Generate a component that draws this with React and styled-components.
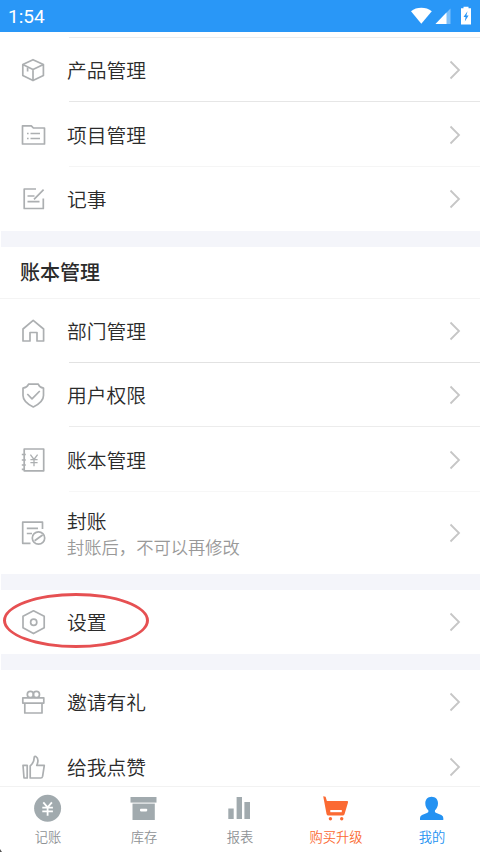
import React from 'react';
import styled, { createGlobalStyle } from 'styled-components';

const App = () => {
  return (
    <Page>
      <GlobalStyle />
      <StatusBar>
        <Time>1:54</Time>
        <StatusIcons />
      </StatusBar>
      <Content>
        <TopStrip />
        {groups.map((group, index) => (
          <Group key={index}>
            {group.title && <GroupTitle>{group.title}</GroupTitle>}
            {group.items.map((item) => (
              <MenuItem key={item.title} {...item} />
            ))}
          </Group>
        ))}
      </Content>
      <TabBar>
        {tabs.map((tab) => (
          <Tab key={tab.label} $color={tab.color}>
            <TabIcon viewBox="0 0 32 30">{tab.icon}</TabIcon>
            {tab.label}
          </Tab>
        ))}
      </TabBar>
      <Corner />
    </Page>
  );
};

const MenuItem = ({ title, desc, icon, height, line, marked }) => (
  <ItemStyle $height={height}>
    <ItemIcon viewBox="0 0 26 26">{icon}</ItemIcon>
    <ItemBody $line={line}>
      <div>
        <ItemTitle>{title}</ItemTitle>
        {desc && <ItemDesc>{desc}</ItemDesc>}
      </div>
      <Arrow viewBox="0 0 12 20">
        <path d="M1.5 1.5 L10 10 L1.5 18.5" />
      </Arrow>
    </ItemBody>
    {marked && <Mark />}
  </ItemStyle>
);

const StatusIcons = () => (
  <svg width="64" height="20" viewBox="0 0 64 20" fill="#fff">
    <path d="M1 5.2 C6.5 0.6 16 0.6 21.8 5.2 L11.3 17.8 Z" />
    <path d="M40.5 2.5 V18 H25.5 Z" opacity="0.4" />
    <path d="M36.5 6.5 V18 H25.5 Z" />
    <path d="M53.5 2.2 V0.8 H58.5 V2.2 H61 V18.5 H51 V2.2 Z" />
    <path d="M57.5 5.2 L53.5 11 H55.6 L54.8 15.5 L58.6 9.4 H56.4 Z" fill="#2997f7" />
  </svg>
);

const icons = {
  product: (
    <>
      <path d="M13 2.7 L23.4 7.6 V18.6 L13 23.6 L2.8 18.6 V7.6 Z M2.8 7.6 L13 12.6 L23.4 7.6 M13 12.6 V23.6" />
      <path d="M7.6 10.5 V14.5" />
    </>
  ),
  project: (
    <>
      <path d="M2.5 22 V3.8 H11.3 L13.4 6 H24.5 V22 Z" />
      <path d="M7 11.5 H8.6 M10.5 11.5 H20 M7 16.5 H8.6 M10.5 16.5 H20" />
    </>
  ),
  note: (
    <>
      <path d="M16 3 H4.2 V22.5 H23.3 V12.5" />
      <path d="M23.6 3.6 L14 13.4 M7.5 10 H14.5 M7.5 15.6 H19.5" />
    </>
  ),
  home: <path d="M3 23 V11 L13.2 2.4 L23.6 11 V23 H17 V14.5 H10 V23 Z" />,
  shield: (
    <>
      <path d="M8.5 2.2 H18.3 Q19.5 5.4 23.5 6.2 V13.5 Q23.5 20 13.3 25 Q3 20 3 13.5 V6.2 Q7.2 5.4 8.5 2.2 Z" />
      <path d="M7.3 12 L12 16.8 L19.8 9" />
    </>
  ),
  book: (
    <>
      <path d="M4.2 2 H23.7 V23.8 H4.2 Z" />
      <path d="M1.8 7.5 H5.8 M1.8 13 H5.8 M1.8 18 H5.8 M1.8 22.4 H4" />
      <path d="M10.4 7.7 L14 12.5 L17.6 7.7 M14 12.5 V19.2 M10.4 12.7 H17.6 M10.4 15.7 H17.6" strokeWidth="1.3" />
    </>
  ),
  lock: (
    <>
      <path d="M22.5 9 V2.2 H2.7 V23.3 H10.5 M6.8 8.3 H18 M6.8 13.5 H12" />
      <circle cx="18.5" cy="18" r="6.2" />
      <path d="M14.6 20.8 L22.6 15" />
    </>
  ),
  setting: (
    <>
      <path d="M13.5 1.8 L24.2 7.2 V18.8 L13.5 24.6 L3 18.8 V7.2 Z" />
      <circle cx="13.7" cy="13.2" r="3.1" />
    </>
  ),
  gift: (
    <>
      <path d="M2.8 8.8 H23.8 V14.1 H2.8 Z M4.8 14.1 V24 H22 V14.1" />
      <circle cx="10.4" cy="5.4" r="3.1" />
      <circle cx="16.4" cy="5.4" r="3.1" />
    </>
  ),
  like: (
    <>
      <path d="M3 11.3 H7.2 V24 H4 Z" />
      <path d="M10.2 24 V12 Q14.2 8.5 14.2 3.4 Q14.4 2 15.8 2.5 Q19.5 4.6 16.8 11.4 H24.3 L22.6 22.4 Q22.2 24 20.8 24 Z" />
    </>
  ),
};

const groups = [
  {
    items: [
      { title: '产品管理', icon: icons.product, height: 64, line: '#e6e6e6' },
      { title: '项目管理', icon: icons.project, height: 65, line: '#f5f5f5' },
      { title: '记事', icon: icons.note, height: 64 },
    ],
  },
  {
    title: '账本管理',
    items: [
      { title: '部门管理', icon: icons.home, height: 64, line: '#e2e2e2' },
      { title: '用户权限', icon: icons.shield, height: 64, line: '#ececec' },
      { title: '账本管理', icon: icons.book, height: 65, line: '#f7f7f7' },
      { title: '封账', desc: '封账后，不可以再修改', icon: icons.lock, height: 82 },
    ],
  },
  {
    items: [{ title: '设置', icon: icons.setting, height: 64, marked: true }],
  },
  {
    items: [
      { title: '邀请有礼', icon: icons.gift, height: 64 },
      { title: '给我点赞', icon: icons.like, height: 65 },
    ],
  },
];

const tabs = [
  {
    label: '记账',
    color: '#8f9396',
    icon: (
      <>
        <circle cx="15.6" cy="15.3" r="13.5" fill="#a1aaae" />
        <path
          d="M11.3 9.3 L15.6 14.3 L19.9 9.3 M15.6 14.3 V22.8 M10.3 14.6 H20.9 M10.3 18.4 H20.9"
          fill="none"
          stroke="#fff"
          strokeWidth="1.8"
        />
      </>
    ),
  },
  {
    label: '库存',
    color: '#8f9396',
    icon: (
      <g fill="#a1aaae">
        <path d="M2.5 4 H28.5 V9.6 H2.5 Z" />
        <path d="M4.5 10.6 H26.8 V27 H4.5 Z" />
        <rect x="12" y="15.8" width="7.2" height="2.6" rx="0.8" fill="#fff" />
      </g>
    ),
  },
  {
    label: '报表',
    color: '#8f9396',
    icon: (
      <path
        d="M4.3 15.5 H9.7 V26 H4.3 Z M12.6 4 H18 V26 H12.6 Z M20.4 9 H26 V26 H20.4 Z"
        fill="#a1aaae"
      />
    ),
  },
  {
    label: '购买升级',
    color: '#fb6a33',
    icon: (
      <g fill="#fb6a33">
        <path d="M3.2 3.2 L5.6 3.7 L6.9 8 H27.2 Q28.5 8.2 28 9.5 L24.5 21.3 Q24 22.5 22.8 22.5 H8.3 Q7 22.5 6.6 21.2 Z" />
        <rect x="10.3" y="17" width="11.5" height="2.2" fill="#fff" />
        <circle cx="10.4" cy="25.7" r="1.7" />
        <circle cx="21.7" cy="25.7" r="1.7" />
      </g>
    ),
  },
  {
    label: '我的',
    color: '#2492f2',
    icon: (
      <path
        d="M15.6 3.8 C19.5 3.8 22 6.6 22 10.2 C22 13.4 20.7 15.6 19 17.2 C18.6 19 19.2 19.6 21 20.3 L25.3 22 Q27.3 22.8 27.3 25 V27 H4 V25 Q4 22.8 6 22 L10.3 20.3 C12.1 19.6 12.7 19 12.3 17.2 C10.5 15.6 9.3 13.4 9.3 10.2 C9.3 6.6 11.8 3.8 15.6 3.8 Z"
        fill="#2492f2"
      />
    ),
  },
];

const GlobalStyle = createGlobalStyle`
  * {
    box-sizing: border-box;
  }
  body {
    margin: 0;
    font-family: "Noto Sans CJK SC", sans-serif;
    font-weight: 350;
    background: #fff;
  }
`;

const Page = styled.div`
  position: relative;
  display: flex;
  flex-direction: column;
  width: 480px;
  height: 852px;
  overflow: hidden;
  background: #fff;
`;

const StatusBar = styled.div`
  display: flex;
  flex-shrink: 0;
  justify-content: space-between;
  align-items: center;
  height: 32px;
  padding: 0 6px 0 8px;
  background: #2997f7;
`;

const Time = styled.div`
  font-family: Roboto, sans-serif;
  font-weight: 400;
  font-size: 19px;
  line-height: 32px;
  padding-top: 2px;
  color: #fff;
`;

const Content = styled.div`
  flex: 1;
  min-height: 0;
  overflow: hidden;
`;

const TopStrip = styled.div`
  height: 6px;
  margin-left: 69px;
  border-bottom: 1px solid #ececec;
`;

const Group = styled.div`
  & + &::before {
    content: '';
    display: block;
    height: 16px;
    margin-left: 1px;
    background: #f4f5fa;
  }
`;

const GroupTitle = styled.div`
  height: 52px;
  padding-left: 20px;
  border-bottom: 1px solid #f4f4f4;
  font-weight: 500;
  font-size: 20px;
  line-height: 50px;
  color: #2b2b2b;
`;

const ItemStyle = styled.div`
  position: relative;
  display: flex;
  align-items: center;
  height: ${(props) => props.$height}px;
  padding-left: 20px;
`;

const ItemIcon = styled.svg`
  width: 26px;
  height: 26px;
  margin-right: 21px;
  fill: none;
  stroke: #acafb1;
  stroke-width: 1.7;
  stroke-linejoin: round;
`;

const ItemBody = styled.div`
  flex: 1;
  display: flex;
  justify-content: space-between;
  align-items: center;
  height: 100%;
  padding-right: 19px;
  background: ${(props) =>
    props.$line ? `linear-gradient(${props.$line}, ${props.$line}) 2px 100% / 100% 1px no-repeat` : 'none'};
`;

const ItemTitle = styled.div`
  font-size: 19.8px;
  line-height: 26px;
  color: #2b2b2b;
`;

const ItemDesc = styled.div`
  font-size: 17.3px;
  line-height: 25px;
  color: #999;
`;

const Arrow = styled.svg`
  width: 12px;
  height: 20px;
  fill: none;
  stroke: #c6c6c6;
  stroke-width: 1.8;
`;

/* red ellipse drawn over the highlighted row */
const Mark = styled.div`
  position: absolute;
  left: 3px;
  top: 3px;
  width: 146px;
  height: 55px;
  border: 3px solid #e65052;
  border-radius: 50%;
`;

const TabBar = styled.div`
  display: flex;
  flex-shrink: 0;
  height: 66px;
  border-top: 1px solid #f2f2f2;
  background: #fff;
`;

const Tab = styled.div`
  flex: 1;
  display: flex;
  flex-direction: column;
  align-items: center;
  padding-top: 6px;
  font-size: 13.3px;
  line-height: 27px;
  color: ${(props) => props.$color};
`;

const TabIcon = styled.svg`
  width: 32px;
  height: 30px;
  flex-shrink: 0;
`;

const Corner = styled.div`
  position: absolute;
  left: 0;
  bottom: 0;
  border-left: 2px solid #555;
  border-top: 3px solid transparent;
`;

export default App;
